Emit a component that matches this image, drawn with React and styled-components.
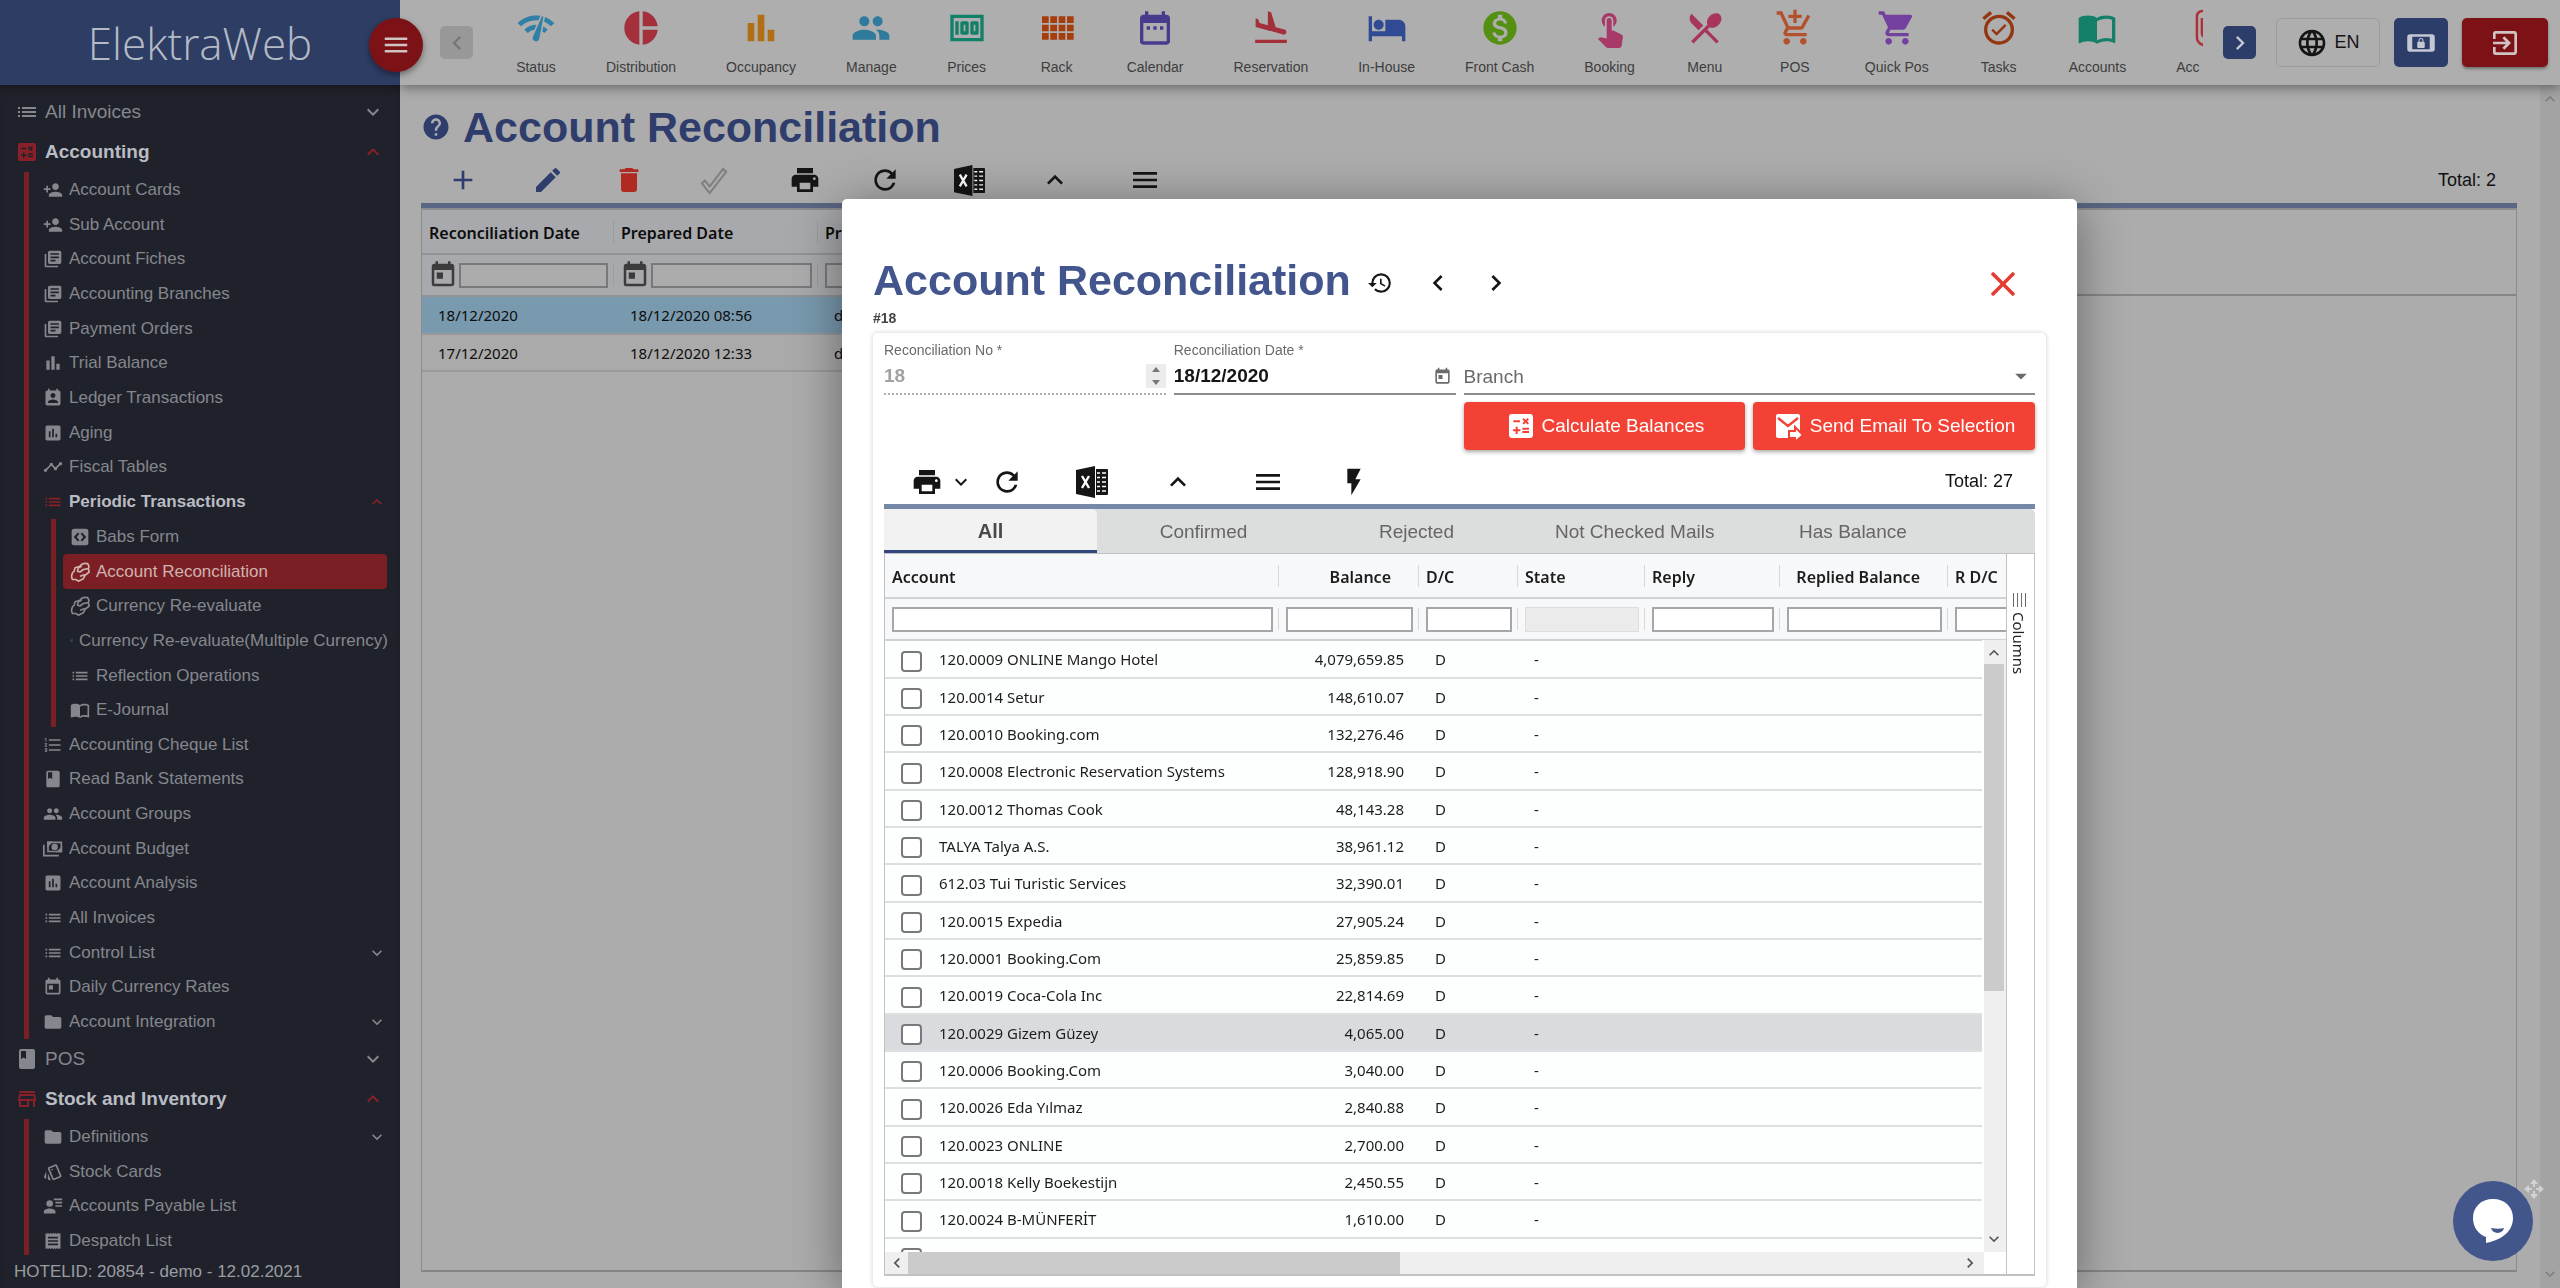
import React from 'react';
import styled, { createGlobalStyle } from 'styled-components';
import {
   MdNetworkCheck, MdPieChart, MdBarChart, MdGroup, MdMoney, MdDateRange, MdFlightLand,
   MdHotel, MdMonetizationOn, MdTouchApp, MdRestaurantMenu, MdAddShoppingCart, MdShoppingCart, MdAlarmOn,
   MdImportContacts, MdAttachFile, MdLanguage, MdScreenLockLandscape, MdExitToApp, MdMenu, MdList,
   MdCalculate, MdPersonAdd, MdLibraryBooks, MdPermContactCalendar, MdAssessment, MdTimeline,
   MdFormatListNumbered, MdClass, MdToday, MdFolder, MdOutlineStore, MdOutlineStyle, MdReceipt, MdHelp,
   MdAdd, MdEdit, MdDelete, MdPrint, MdRefresh, MdHistory, MdClose, MdFlashOn, MdExpandMore, MdExpandLess,
   MdChevronLeft, MdChevronRight, MdArrowDropDown,
} from 'react-icons/md';

const sans = '"Liberation Sans", Arial, sans-serif';
const grid = '"Noto Sans", "Open Sans", sans-serif';

const GlobalStyle = createGlobalStyle`
   *, *::before, *::after { box-sizing: border-box; }
   body { margin: 0; font-family: ${sans}; background: #acacac; overflow: hidden; }
   button, input, select { font: inherit; color: inherit; }
   button { border: 0; background: none; padding: 0; cursor: pointer; }
   svg { display: block; flex: none; }
   h1, h2, p, ul { margin: 0; padding: 0; }
   ul { list-style: none; }
   a { color: inherit; text-decoration: none; }
`;

/* ---------- icons ---------- */

const ExcelIcon = ({ size = 32 }) => (
   <svg width={size} height={size} viewBox="0 0 32 32">
      <path d="M0 4 19 0v32L0 28z" fill="currentColor" />
      <path d="M20 3h11a1 1 0 0 1 1 1v24a1 1 0 0 1-1 1H20z" fill="currentColor" />
      <path d="m6 10 7 12M13 10 6 22" stroke="#fff" strokeWidth="2.4" />
      <path d="M21 7h3M26 7h4M21 11.500h3M26 11.500h4M21 16h3M26 16h4M21 20.500h3M26 20.500h4M21 25h3M26 25h4" stroke="#fff" strokeWidth="1.500" />
   </svg>
);

const RackIcon = ({ size = 40 }) => (
   <svg width={size} height={size} viewBox="0 0 24 24" fill="currentColor">
      <path d="M3 5h4v4H3zM8 5h4v4H8zM13 5h4v4h-4zM18 5h4v4h-4zM3 10h4v4H3zM8 10h4v4H8zM13 10h4v4h-4zM18 10h4v4h-4zM3 15h4v4H3zM8 15h4v4H8zM13 15h4v4h-4zM18 15h4v4h-4z" />
   </svg>
);

const CheckOutlineIcon = ({ size = 32 }) => (
   <svg width={size} height={size} viewBox="0 0 32 32" fill="none" stroke="currentColor" strokeWidth="2.200">
      <path d="m3 19 3-3 5 6L25 4l3 3-17 22z" />
   </svg>
);

const CodeBoxIcon = ({ size = 20 }) => (
   <svg width={size} height={size} viewBox="0 0 24 24" fill="currentColor" fillRule="evenodd">
      <path d="M5 2h14a3 3 0 0 1 3 3v14a3 3 0 0 1-3 3H5a3 3 0 0 1-3-3V5a3 3 0 0 1 3-3zM9.500 6.500 4.500 12l5 5.500 1.700-1.600L8 12l3.200-3.900zM14.500 6.500l-1.700 1.600L16 12l-3.200 3.900 1.700 1.600 5-5.500z" />
   </svg>
);

const HandsIcon = ({ size = 22 }) => (
   <svg width={size} height={size} viewBox="0 0 24 24" fill="none" stroke="currentColor" strokeWidth="2" strokeLinejoin="round">
      <path d="M3 21c-2-3-1-8 2-10l1-4 6-2c2-3 5-4 9-3 2 2 2 4 1 6l1 4-5 4-2 4-6 3-3-2z" />
      <path d="m22 8-6 1-4 3-3-1 1-4 4-2M18 15l-6 2" />
   </svg>
);

const CashIcon = ({ size = 20 }) => (
   <svg width={size} height={size} viewBox="0 0 24 24" fill="none" stroke="currentColor" strokeWidth="2">
      <path d="M1 7v13h18" />
      <path d="M6 4h16v11H6z" />
      <circle cx="14" cy="9.500" r="2.800" fill="currentColor" />
      <path d="M6 4h4L6 8zM22 15h-4l4-4z" fill="currentColor" />
   </svg>
);

const PayableIcon = ({ size = 20 }) => (
   <svg width={size} height={size} viewBox="0 0 24 24" fill="currentColor">
      <circle cx="8" cy="9" r="4" />
      <path d="M1 21v-2c0-3 4-4 7-4s7 1 7 4v2zM13 3h10v2H13zM15 7h8v2h-8zM15 11h8v2h-8z" />
   </svg>
);

const SendMailIcon = ({ size = 32 }) => (
   <svg width={size} height={size} viewBox="0 0 32 32">
      <path d="M5 4h20a2 2 0 0 1 2 2v22H5a2 2 0 0 1-2-2V6a2 2 0 0 1 2-2z" fill="#fff" />
      <path d="m5 8 10 8L25 8" fill="none" stroke="#f34235" strokeWidth="2.400" />
      <path d="M16 21h6v-4l8 8-8 7v-4h-6z" fill="#fff" stroke="#f34235" strokeWidth="2" />
   </svg>
);

const ColumnsIcon = () => (
   <svg width="14" height="14" viewBox="0 0 14 14" stroke="#6c6c6c">
      <path d="M1.500 0v14M5.500 0v14M9.500 0v14M13.500 0v14" />
   </svg>
);

const ChatIcon = () => (
   <svg width="42" height="46" viewBox="0 0 42 46">
      <path d="M21 1C9 1 1 9 1 20c0 9 5 16 13 19v6c11-2 27-9 27-25C41 9 33 1 21 1z" fill="#fff" />
      <path d="M19 30c5 1 9 1 13 0-1 6-11 7-13 0z" fill="#42568c" />
   </svg>
);

const MoveIcon = () => (
   <svg width="20" height="20" viewBox="0 0 20 20" fill="#d2d2d2">
      <path d="m10 0 4 5h-3v3H9V5H6zM10 20l-4-5h3v-3h2v3h3zM0 10l5-4v3h3v2H5v3zM20 10l-5 4v-3h-3V9h3V6z" />
   </svg>
);

/* ---------- shell ---------- */

const Shell = styled.div`
   display: grid;
   grid-template-columns: 400px 1fr;
   grid-template-rows: 85px 1fr;
   height: 100vh;
`;

const Brand = styled.div`
   display: flex;
   align-items: center;
   justify-content: center;
   position: relative;
   z-index: 3;
   background: #2d3d64;
   color: #b4bac6;
   font-family: "Open Sans", ${grid};
   font-weight: 300;
   font-size: 44px;
`;

const MenuToggle = styled.button`
   position: absolute;
   top: 18px;
   right: -23px;
   display: grid;
   place-items: center;
   width: 54px;
   height: 54px;
   border-radius: 50%;
   background: #7c1116;
   color: #d0c3c4;
   box-shadow: 0 3px 6px rgba(0, 0, 0, 0.4);
`;

const TopBar = styled.header`
   display: flex;
   align-items: center;
   padding: 0 12px 0 40px;
   background: #aeaeae;
   box-shadow: 0 2px 12px rgba(0, 0, 0, 0.45);
   z-index: 2;
`;

const ScrollButton = styled.button`
   display: grid;
   place-items: center;
   flex: none;
   width: 33px;
   height: 33px;
   border-radius: 5px;
   background: ${({ $active }) => ($active ? '#2d3d69' : '#989898')};
   color: ${({ $active }) => ($active ? '#c3c8d4' : '#777')};
`;

const Shortcuts = styled.nav`
   display: flex;
   flex: 1;
   min-width: 0;
   height: 85px;
   margin: 0 20px 0 18px;
   overflow: hidden;
`;

const Shortcut = styled.a`
   display: flex;
   flex-direction: column;
   align-items: center;
   flex: none;
   gap: 11px;
   min-width: ${({ $wide }) => ($wide ? '106px' : '0')};
   padding: 8px 25px 0;
   font-size: 14px;
   line-height: 16px;
   color: #3d3d3d;

   svg { color: ${({ $color }) => $color}; }
   span { align-self: ${({ $wide }) => ($wide ? 'flex-start' : 'center')}; }
`;

const HeaderButton = styled.button`
   display: flex;
   align-items: center;
   justify-content: center;
   flex: none;
   gap: 6px;
   width: ${({ $width }) => $width};
   height: 49px;
   margin-left: ${({ $gap }) => $gap || '15px'};
   border: 1px solid ${({ $border }) => $border || 'transparent'};
   border-radius: 5px;
   background: ${({ $bg }) => $bg || 'transparent'};
   color: ${({ $color }) => $color || '#151515'};
   font-size: 18px;
   box-shadow: ${({ $raised }) => ($raised ? '0 2px 3px rgba(0, 0, 0, 0.35)' : 'none')};
`;

/* ---------- sidebar ---------- */

const Sidebar = styled.aside`
   display: flex;
   flex-direction: column;
   min-height: 0;
   background: #20222b;
   color: #85878e;
   box-shadow: inset 0 8px 8px -6px #14151c;
`;

const Menu = styled.ul`
   flex: 1;
   min-height: 0;
   padding-top: 7px;
   overflow: hidden;
`;

const MenuLink = styled.a`
   display: flex;
   align-items: center;
   gap: 6px;
   height: 40px;
   padding: 0 15px;
   font-size: 19px;
   font-weight: ${({ $open }) => ($open ? 700 : 400)};
   color: ${({ $open }) => ($open ? '#babcc4' : 'inherit')};

   svg { color: ${({ $open }) => ($open ? '#8a1f27' : 'inherit')}; }
   svg:last-child { margin-left: auto; }
`;

const SubMenu = styled.ul`
   position: relative;
   padding-left: 36px;

   &::before {
      content: '';
      position: absolute;
      top: 0;
      bottom: 0;
      left: 24px;
      width: 5px;
      background: #7a2024;
   }
`;

const NestedMenu = styled(SubMenu)`
   padding-left: 27px;
   &::before { left: 15px; }
`;

const SubLink = styled.a`
   display: flex;
   align-items: center;
   gap: 6px;
   height: 35px;
   margin-right: 13px;
   padding-left: 7px;
   border-radius: 4px;
   font-size: 17px;
   white-space: nowrap;
   font-weight: ${({ $open }) => ($open ? 700 : 400)};
   background: ${({ $active }) => ($active ? '#7c1f24' : 'transparent')};
   color: ${({ $open, $active }) => ($active ? '#cfb3b0' : $open ? '#babcc4' : 'inherit')};

   li:nth-child(3n) > & { height: 34px; }
   svg { color: ${({ $open }) => ($open ? '#8a1f27' : 'inherit')}; }
   svg:nth-child(3) { margin-left: auto; }
`;

const SidebarFooter = styled.p`
   flex: none;
   height: 33px;
   padding-left: 14px;
   font-size: 17px;
   line-height: 34px;
   color: #9a9ca2;
`;

/* ---------- page ---------- */

const Page = styled.main`
   display: flex;
   min-width: 0;
   min-height: 0;
`;

const PageBody = styled.div`
   display: flex;
   flex-direction: column;
   flex: 1;
   min-width: 0;
   padding: 15px 23px 16px 21px;
`;

const PageTitle = styled.h1`
   display: flex;
   align-items: center;
   gap: 12px;
   font-size: 43px;
   line-height: 54px;
   color: #2e3d6c;
`;

const Toolbar = styled.div`
   display: flex;
   align-items: center;
   height: ${({ $height }) => $height};
   padding: ${({ $pad }) => $pad};
   border-bottom: 5px solid ${({ $line }) => $line};
   font-size: 18px;
   color: #111;
`;

const ToolButton = styled.button`
   display: grid;
   place-items: center;
   flex: none;
   width: ${({ $width }) => $width}px;
   height: 40px;
   color: ${({ $color }) => $color || '#151515'};
`;

const Total = styled.p`
   margin-left: auto;
`;

/* the filter row's rule runs on past the last column */
const PageGrid = styled.div`
   flex: 1;
   min-height: 0;
   border: 1px solid #8a8c90;
   border-top-width: 2px;
   border-bottom: 2px solid #858585;
   background: linear-gradient(#868686, #868686) no-repeat 0 84px / 100% 2px;
   overflow: hidden;
`;

const ScrollTrack = styled.div`
   display: flex;
   flex-direction: ${({ $horizontal }) => ($horizontal ? 'row' : 'column')};
   align-items: center;
   justify-content: space-between;
   flex: none;
   width: 20px;
   background: ${({ $dim }) => ($dim ? '#a3a3a3' : '#efefef')};
   color: ${({ $dim }) => ($dim ? '#808080' : '#555')};
`;

const PageScroll = styled(ScrollTrack)`
   padding: 4px 0;
`;

const Table = styled.table`
   table-layout: fixed;
   border-collapse: collapse;
   width: ${({ $width }) => $width};
   font-family: ${grid};
   font-size: 15px;
   color: ${({ $dim }) => ($dim ? '#0d0d0d' : '#1d1d1d')};
   background: ${({ $dim }) => ($dim ? '#aaaaab' : '#fdfefe')};
`;

const HeadRow = styled.tr`
   height: ${({ $filter }) => ($filter ? '42px' : '44px')};
   border-bottom: 2px solid ${({ $dim }) => ($dim ? '#929396' : '#d0d2d4')};
   background: ${({ $dim }) => ($dim ? '#a8a9ac' : '#f7f8fa')};
`;

const HeadCell = styled.th`
   padding: 2px ${({ $right }) => ($right ? '28px' : '0')} 0 7px;
   text-align: ${({ $right }) => ($right ? 'right' : 'left')};
   font-size: 16px;
   font-weight: 600;
   white-space: nowrap;
   background: ${({ $dim }) => `linear-gradient(${$dim ? '#9b9c9e, #9b9c9e' : '#d6d8da, #d6d8da'}) no-repeat right center / 1px 22px`};
`;

const FilterCell = styled.td`
   padding: 0 6px 0 7px;
   background: ${({ $dim }) => `linear-gradient(${$dim ? '#9b9c9e, #9b9c9e' : '#d6d8da, #d6d8da'}) no-repeat right center / 1px 22px`};

   label { display: flex; align-items: center; gap: 1px; margin-left: -1px; color: #3c3c3c; }
`;

const FilterInput = styled.input`
   display: block;
   width: 100%;
   min-width: 0;
   height: 25px;
   padding: 0 4px;
   border: 2px solid ${({ $dim }) => ($dim ? '#77797c' : '#a4a6a9')};
   border-radius: 0;
   background: ${({ $dim }) => ($dim ? '#acacac' : '#fff')};

   &:disabled { background: #ebebec; border: 1px solid #dcdddf; }
`;

const BodyRow = styled.tr`
   height: 37px;
   border-bottom: 2px solid ${({ $dim }) => ($dim ? '#98999b' : '#dedfe1')};
   background: ${({ $bg }) => $bg || 'transparent'};

   &:nth-child(3n + 1) { height: 38px; }
`;

const Cell = styled.td`
   padding: 0 ${({ $right }) => ($right ? '15px' : '0')} 0 16px;
   text-align: ${({ $right }) => ($right ? 'right' : 'left')};
   white-space: nowrap;

   label { display: flex; align-items: center; gap: 17px; }
`;

const Tick = styled.input`
   appearance: none;
   flex: none;
   width: 21px;
   height: 21px;
   margin: 4px 0 0;
   border: 2px solid #77797c;
   border-radius: 4px;
   background: #fff;
`;

/* ---------- dialog ---------- */

const Dialog = styled.section`
   position: fixed;
   top: 199px;
   right: 483px;
   bottom: 0;
   left: 842px;
   z-index: 5;
   display: flex;
   flex-direction: column;
   padding: 55px 31px 1px;
   border-radius: 5px 5px 0 0;
   background: #fff;
   box-shadow: 0 8px 50px rgba(0, 0, 0, 0.42);
`;

const DialogHead = styled.div`
   display: flex;
   align-items: center;
   height: 52px;
   color: #151515;
`;

const DialogTitle = styled.h2`
   font-size: 43px;
   line-height: 52px;
   color: #42558c;
`;

const HeadButton = styled(ToolButton)`
   margin: 6px 0 0;
   &:last-child { margin-left: auto; }
`;

const RecordId = styled.p`
   font-size: 14px;
   font-weight: 700;
   line-height: 24px;
   color: #444;
`;

const Card = styled.div`
   display: flex;
   flex-direction: column;
   flex: 1;
   min-height: 0;
   margin-top: 3px;
   padding: 8px 11px 11px;
   border-radius: 5px;
   box-shadow: 0 0 5px rgba(0, 0, 0, 0.2);
`;

const Fields = styled.form`
   display: grid;
   grid-template-columns: repeat(4, minmax(0, 1fr));
   gap: 7px 8px;
`;

const Field = styled.div`
   grid-column: span ${({ $span }) => $span || 1};
   display: flex;
   flex-direction: column;
   height: 54px;
   border-bottom: 2px ${({ $dotted }) => ($dotted ? 'dotted #b0b0b0' : 'solid #8c8c8c')};
   color: #6a6a6a;

   label { font-size: 14px; line-height: 18px; }
`;

const FieldRow = styled.div`
   display: flex;
   align-items: center;
   flex: 1;
   padding-right: ${({ $inset }) => $inset || '0'};
`;

const TextInput = styled.input`
   flex: 1;
   min-width: 0;
   padding: 0;
   border: 0;
   background: none;
   font-size: 19px;
   font-weight: 700;
   color: #151515;

   &:disabled { color: #a2a2a2; }
`;

const Spinner = styled.span`
   display: flex;
   flex-direction: column;
   align-items: center;
   width: 20px;
   height: 24px;
   background: #ececec;
   color: #777;

   svg + svg { margin-top: -4px; }
`;

const BranchSelect = styled.select`
   appearance: none;
   flex: 1;
   padding: 0;
   border: 0;
   background: none;
   font-size: 19px;
   color: #6a6a6a;
`;

const ActionButton = styled.button`
   display: flex;
   align-items: center;
   justify-content: center;
   gap: 5px;
   height: 48px;
   border-radius: 4px;
   background: #f34235;
   color: #fff;
   font-size: 19px;
   white-space: nowrap;
   box-shadow: 0 2px 4px rgba(0, 0, 0, 0.35);

   &:first-of-type { grid-column: 3; }
`;

const Tabs = styled.div`
   display: flex;
   flex: none;
   height: 44px;
   background: #dcdddd;
   border-radius: 0 5px 0 0;
`;

const Tab = styled.button`
   min-width: 213px;
   padding: 4px 32px 0;
   border-bottom: 3px solid ${({ $active }) => ($active ? '#34477c' : 'transparent')};
   border-radius: 0 5px 0 0;
   background: ${({ $active }) => ($active ? '#f2f2f3' : 'transparent')};
   font-size: ${({ $active }) => ($active ? '20px' : '19px')};
   font-weight: ${({ $active }) => ($active ? 700 : 400)};
   color: ${({ $active }) => ($active ? '#4a4a4a' : '#666')};
`;

const Frame = styled.div`
   display: flex;
   flex: 1;
   min-height: 0;
   border: 1px solid #c0c2c4;
   border-bottom-width: 2px;
`;

const GridSide = styled.div`
   position: relative;
   display: flex;
   flex-direction: column;
   flex: 1;
   min-width: 0;
`;

const GridView = styled.div`
   flex: 1;
   min-height: 0;
   overflow: hidden;
   background: #fff;
`;

const VerticalScroll = styled(ScrollTrack)`
   position: absolute;
   top: 86px;
   right: 0;
   bottom: 22px;
   width: 24px;
   padding: 3px 2px 3px 0;
   border-left: 2px solid #fff;
`;

const HorizontalScroll = styled(ScrollTrack)`
   width: auto;
   height: 22px;
   margin-right: 22px;
   padding: 0 4px 0 2px;
`;

const Thumb = styled.div`
   width: ${({ $w }) => $w || '100%'};
   height: ${({ $h }) => $h || '100%'};
   margin: ${({ $m }) => $m || '0'};
   background: #cbcbcb;
`;

const ColumnsTab = styled.button`
   display: flex;
   flex-direction: column;
   align-items: center;
   flex: none;
   gap: 5px;
   width: 28px;
   padding: 39px 3px 0 0;
   border-left: 1px solid #c0c2c4;
   color: #222;
   font-family: ${grid};
   font-size: 15px;

   span { writing-mode: vertical-rl; line-height: 20px; }
`;

const ChatButton = styled.button`
   position: fixed;
   right: 27px;
   bottom: 27px;
   z-index: 6;
   display: grid;
   place-items: center;
   width: 80px;
   height: 80px;
   border-radius: 50%;
   background: #42568c;
`;

const MoveHandle = styled.span`
   position: fixed;
   right: 16px;
   bottom: 89px;
   z-index: 7;
`;

/* ---------- data ---------- */

const shortcuts = [
   ['Status', MdNetworkCheck, '#2f7fa6'],
   ['Distribution', MdPieChart, '#a3303b'],
   ['Occupancy', MdBarChart, '#b06f14'],
   ['Manage', MdGroup, '#2f7b9d'],
   ['Prices', MdMoney, '#128068'],
   ['Rack', RackIcon, '#a63d0d'],
   ['Calendar', MdDateRange, '#473b8d'],
   ['Reservation', MdFlightLand, '#a32f3a'],
   ['In-House', MdHotel, '#304b94'],
   ['Front Cash', MdMonetizationOn, '#559012'],
   ['Booking', MdTouchApp, '#a83a6a'],
   ['Menu', MdRestaurantMenu, '#a8365a'],
   ['POS', MdAddShoppingCart, '#b4502c'],
   ['Quick Pos', MdShoppingCart, '#7440a0'],
   ['Tasks', MdAlarmOn, '#943711'],
   ['Accounts', MdImportContacts, '#14806a'],
];

const periodic = [
   ['Babs Form', CodeBoxIcon],
   ['Account Reconciliation', HandsIcon],
   ['Currency Re-evaluate', HandsIcon],
   ['Currency Re-evaluate(Multiple Currency)', HandsIcon, 3],
   ['Reflection Operations', MdList],
   ['E-Journal', MdImportContacts],
];

const accounting = [
   { label: 'Account Cards', Icon: MdPersonAdd },
   { label: 'Sub Account', Icon: MdPersonAdd },
   { label: 'Account Fiches', Icon: MdLibraryBooks },
   { label: 'Accounting Branches', Icon: MdLibraryBooks },
   { label: 'Payment Orders', Icon: MdLibraryBooks },
   { label: 'Trial Balance', Icon: MdBarChart },
   { label: 'Ledger Transactions', Icon: MdPermContactCalendar },
   { label: 'Aging', Icon: MdAssessment },
   { label: 'Fiscal Tables', Icon: MdTimeline },
   { label: 'Periodic Transactions', Icon: MdList, open: true },
   { label: 'Accounting Cheque List', Icon: MdFormatListNumbered },
   { label: 'Read Bank Statements', Icon: MdClass },
   { label: 'Account Groups', Icon: MdGroup },
   { label: 'Account Budget', Icon: CashIcon },
   { label: 'Account Analysis', Icon: MdAssessment },
   { label: 'All Invoices', Icon: MdList },
   { label: 'Control List', Icon: MdList, more: true },
   { label: 'Daily Currency Rates', Icon: MdToday },
   { label: 'Account Integration', Icon: MdFolder, more: true },
];

const stock = [
   { label: 'Definitions', Icon: MdFolder, more: true },
   { label: 'Stock Cards', Icon: MdOutlineStyle },
   { label: 'Accounts Payable List', Icon: PayableIcon },
   { label: 'Despatch List', Icon: MdReceipt },
];

const balances = [
   ['120.0009 ONLINE Mango Hotel', '4,079,659.85'],
   ['120.0014 Setur', '148,610.07'],
   ['120.0010 Booking.com', '132,276.46'],
   ['120.0008 Electronic Reservation Systems', '128,918.90'],
   ['120.0012 Thomas Cook', '48,143.28'],
   ['TALYA Talya A.S.', '38,961.12'],
   ['612.03 Tui Turistic Services', '32,390.01'],
   ['120.0015 Expedia', '27,905.24'],
   ['120.0001 Booking.Com', '25,859.85'],
   ['120.0019 Coca-Cola Inc', '22,814.69'],
   ['120.0029 Gizem Güzey', '4,065.00'],
   ['120.0006 Booking.Com', '3,040.00'],
   ['120.0026 Eda Yılmaz', '2,840.88'],
   ['120.0023 ONLINE', '2,700.00'],
   ['120.0018 Kelly Boekestijn', '2,450.55'],
   ['120.0024 B-MÜNFERİT', '1,610.00'],
];

const tabs = ['All', 'Confirmed', 'Rejected', 'Not Checked Mails', 'Has Balance'];
const columns = ['Account', 'Balance', 'D/C', 'State', 'Reply', 'Replied Balance', 'R D/C'];
const columnWidths = [394, 140, 99, 127, 135, 168, 120];

/* ---------- components ---------- */

const SubItems = ({ items }) => (
   <SubMenu>
      {items.map(({ label, Icon, open, more }) => (
         <li key={label}>
            <SubLink href="#" $open={open}>
               <Icon size={20} />
               <span>{label}</span>
               {open && <MdExpandLess size={20} />}
               {more && <MdExpandMore size={20} />}
            </SubLink>
            {open && (
               <NestedMenu>
                  {periodic.map(([name, SubIcon, size = 20]) => (
                     <li key={name}>
                        <SubLink href="#" $active={name === 'Account Reconciliation'}>
                           <SubIcon size={size} />
                           <span>{name}</span>
                        </SubLink>
                     </li>
                  ))}
               </NestedMenu>
            )}
         </li>
      ))}
   </SubMenu>
);

const SideNav = () => (
   <Sidebar>
      <Menu>
         <li>
            <MenuLink href="#"><MdList size={24} /><span>All Invoices</span><MdExpandMore size={24} /></MenuLink>
         </li>
         <li>
            <MenuLink href="#" $open><MdCalculate size={24} /><span>Accounting</span><MdExpandLess size={24} /></MenuLink>
            <SubItems items={accounting} />
         </li>
         <li>
            <MenuLink href="#"><MdClass size={24} /><span>POS</span><MdExpandMore size={24} /></MenuLink>
         </li>
         <li>
            <MenuLink href="#" $open><MdOutlineStore size={24} /><span>Stock and Inventory</span><MdExpandLess size={24} /></MenuLink>
            <SubItems items={stock} />
         </li>
      </Menu>
      <SidebarFooter>HOTELID: 20854 - demo - 12.02.2021</SidebarFooter>
   </Sidebar>
);

const Header = () => (
   <TopBar>
      <ScrollButton aria-label="Previous"><MdChevronLeft size={28} /></ScrollButton>
      <Shortcuts>
         {shortcuts.map(([label, Icon, color]) => (
            <Shortcut key={label} href="#" $color={color}>
               <Icon size={40} />
               <span>{label}</span>
            </Shortcut>
         ))}
         <Shortcut href="#" $color="#b03038" $wide>
            <MdAttachFile size={40} />
            <span>Acc</span>
         </Shortcut>
      </Shortcuts>
      <ScrollButton $active aria-label="Next"><MdChevronRight size={28} /></ScrollButton>
      <HeaderButton $width="104px" $gap="20px" $border="#9c9c9c"><MdLanguage size={32} />EN</HeaderButton>
      <HeaderButton $width="54px" $bg="#2d3d69" $color="#c3c8d4" $gap="14px" aria-label="Lock"><MdScreenLockLandscape size={30} /></HeaderButton>
      <HeaderButton $width="86px" $bg="#7c1116" $color="#d0c3c4" $gap="14px" $raised aria-label="Exit"><MdExitToApp size={32} /></HeaderButton>
   </TopBar>
);

const ReconciliationPage = () => (
   <Page>
      <PageBody>
         <PageTitle><MdHelp size={30} />Account Reconciliation</PageTitle>
         <Toolbar $height="54px" $pad="3px 21px 0 0" $line="#5a6683">
            <ToolButton $width={84} $color="#2e3d6c" aria-label="Add"><MdAdd size={32} /></ToolButton>
            <ToolButton $width={86} $color="#2e3d6c" aria-label="Edit"><MdEdit size={32} /></ToolButton>
            <ToolButton $width={76} $color="#b02a22" aria-label="Delete"><MdDelete size={32} /></ToolButton>
            <ToolButton $width={94} $color="#808080" aria-label="Approve"><CheckOutlineIcon size={31} /></ToolButton>
            <ToolButton $width={88} aria-label="Print"><MdPrint size={32} /></ToolButton>
            <ToolButton $width={72} aria-label="Refresh"><MdRefresh size={32} /></ToolButton>
            <ToolButton $width={96} aria-label="Export to Excel"><ExcelIcon size={31} /></ToolButton>
            <ToolButton $width={76} aria-label="Collapse"><MdExpandLess size={32} /></ToolButton>
            <ToolButton $width={104} aria-label="Menu"><MdMenu size={32} /></ToolButton>
            <Total>Total: 2</Total>
         </Toolbar>
         <PageGrid>
            <Table $dim $width="600px">
               <colgroup>
                  <col width="192" /><col width="204" /><col width="204" />
               </colgroup>
               <thead>
                  <HeadRow $dim>
                     <HeadCell $dim>Reconciliation Date</HeadCell>
                     <HeadCell $dim>Prepared Date</HeadCell>
                     <HeadCell $dim>Prepared By</HeadCell>
                  </HeadRow>
                  <HeadRow $dim $filter>
                     <FilterCell $dim>
                        <label><MdToday size={30} /><FilterInput $dim aria-label="Filter reconciliation date" /></label>
                     </FilterCell>
                     <FilterCell $dim>
                        <label><MdToday size={30} /><FilterInput $dim aria-label="Filter prepared date" /></label>
                     </FilterCell>
                     <FilterCell $dim><FilterInput $dim aria-label="Filter prepared by" /></FilterCell>
                  </HeadRow>
               </thead>
               <tbody>
                  <BodyRow $dim $bg="#7999ae">
                     <Cell>18/12/2020</Cell><Cell>18/12/2020 08:56</Cell><Cell>demo</Cell>
                  </BodyRow>
                  <BodyRow $dim>
                     <Cell>17/12/2020</Cell><Cell>18/12/2020 12:33</Cell><Cell>demo</Cell>
                  </BodyRow>
               </tbody>
            </Table>
         </PageGrid>
      </PageBody>
      <PageScroll $dim><MdExpandLess size={20} /><MdExpandMore size={20} /></PageScroll>
   </Page>
);

const BalanceGrid = () => (
   <Frame>
      <GridSide>
         <GridView>
            <Table $width="1183px">
               <colgroup>
                  {columnWidths.map((width, i) => <col key={columns[i]} width={width} />)}
               </colgroup>
               <thead>
                  <HeadRow>
                     {columns.map((name) => (
                        <HeadCell key={name} $right={name.endsWith('Balance')}>{name}</HeadCell>
                     ))}
                  </HeadRow>
                  <HeadRow $filter>
                     {columns.map((name) => (
                        <FilterCell key={name}>
                           <FilterInput aria-label={`Filter ${name}`} disabled={name === 'State'} />
                        </FilterCell>
                     ))}
                  </HeadRow>
               </thead>
               <tbody>
                  {balances.map(([account, balance], i) => (
                     <BodyRow key={account} $bg={i === 10 ? '#dadbdf' : undefined}>
                        <Cell><label><Tick type="checkbox" />{account}</label></Cell>
                        <Cell $right>{balance}</Cell>
                        <Cell>D</Cell>
                        <Cell>-</Cell>
                        <Cell /><Cell /><Cell />
                     </BodyRow>
                  ))}
                  <BodyRow>
                     <Cell><label><Tick type="checkbox" aria-label="Next account" /></label></Cell>
                     <Cell /><Cell /><Cell /><Cell /><Cell /><Cell />
                  </BodyRow>
               </tbody>
            </Table>
         </GridView>
         <HorizontalScroll $horizontal>
            <MdChevronLeft size={20} />
            <Thumb $w="45%" $m="0 auto 0 1px" />
            <MdChevronRight size={20} />
         </HorizontalScroll>
         <VerticalScroll>
            <MdExpandLess size={20} />
            <Thumb $h="54%" $m="1px 0 auto" />
            <MdExpandMore size={20} />
         </VerticalScroll>
      </GridSide>
      <ColumnsTab><ColumnsIcon /><span>Columns</span></ColumnsTab>
   </Frame>
);

const ReconciliationDialog = () => (
   <Dialog role="dialog" aria-labelledby="dialog-title">
      <DialogHead>
         <DialogTitle id="dialog-title">Account Reconciliation</DialogTitle>
         <HeadButton $width={58} aria-label="History"><MdHistory size={26} /></HeadButton>
         <HeadButton $width={58} aria-label="Previous record"><MdChevronLeft size={32} /></HeadButton>
         <HeadButton $width={58} aria-label="Next record"><MdChevronRight size={32} /></HeadButton>
         <HeadButton $width={86} $color="#e53a30" aria-label="Close"><MdClose size={42} /></HeadButton>
      </DialogHead>
      <RecordId>#18</RecordId>
      <Card>
         <Fields>
            <Field $dotted>
               <label htmlFor="rec-no">Reconciliation No *</label>
               <FieldRow>
                  <TextInput id="rec-no" defaultValue="18" disabled />
                  <Spinner>
                     <svg width="10" height="12" viewBox="0 0 10 12"><path d="M5 3l4 5H1z" fill="currentColor" /></svg>
                     <svg width="10" height="16" viewBox="0 0 10 16"><path d="M5 13l4-5H1z" fill="currentColor" /></svg>
                  </Spinner>
               </FieldRow>
            </Field>
            <Field>
               <label htmlFor="rec-date">Reconciliation Date *</label>
               <FieldRow $inset="4px">
                  <TextInput id="rec-date" defaultValue="18/12/2020" />
                  <MdToday size={19} />
               </FieldRow>
            </Field>
            <Field $span={2}>
               <label htmlFor="branch">&nbsp;</label>
               <FieldRow>
                  <BranchSelect id="branch" aria-label="Branch"><option>Branch</option></BranchSelect>
                  <MdArrowDropDown size={28} />
               </FieldRow>
            </Field>
            <ActionButton type="button"><MdCalculate size={32} />Calculate Balances</ActionButton>
            <ActionButton type="button"><SendMailIcon size={32} />Send Email To Selection</ActionButton>
         </Fields>
         <Toolbar $height="59px" $pad="9px 22px 0 21px" $line="#7588a8">
            <ToolButton $width={44} aria-label="Print"><MdPrint size={32} /></ToolButton>
            <ToolButton $width={20} aria-label="Print options"><MdExpandMore size={24} /></ToolButton>
            <ToolButton $width={76} aria-label="Refresh"><MdRefresh size={32} /></ToolButton>
            <ToolButton $width={94} aria-label="Export to Excel"><ExcelIcon size={32} /></ToolButton>
            <ToolButton $width={78} aria-label="Collapse"><MdExpandLess size={32} /></ToolButton>
            <ToolButton $width={102} aria-label="Menu"><MdMenu size={32} /></ToolButton>
            <ToolButton $width={70} aria-label="Quick actions"><MdFlashOn size={32} /></ToolButton>
            <Total>Total: 27</Total>
         </Toolbar>
         <Tabs>
            {tabs.map((tab, i) => <Tab key={tab} $active={i === 0}>{tab}</Tab>)}
         </Tabs>
         <BalanceGrid />
      </Card>
   </Dialog>
);

const App = () => (
   <>
      <GlobalStyle />
      <Shell>
         <Brand>
            ElektraWeb
            <MenuToggle aria-label="Toggle menu"><MdMenu size={30} /></MenuToggle>
         </Brand>
         <Header />
         <SideNav />
         <ReconciliationPage />
      </Shell>
      <ReconciliationDialog />
      <MoveHandle><MoveIcon /></MoveHandle>
      <ChatButton aria-label="Open chat"><ChatIcon /></ChatButton>
   </>
);

export default App;
